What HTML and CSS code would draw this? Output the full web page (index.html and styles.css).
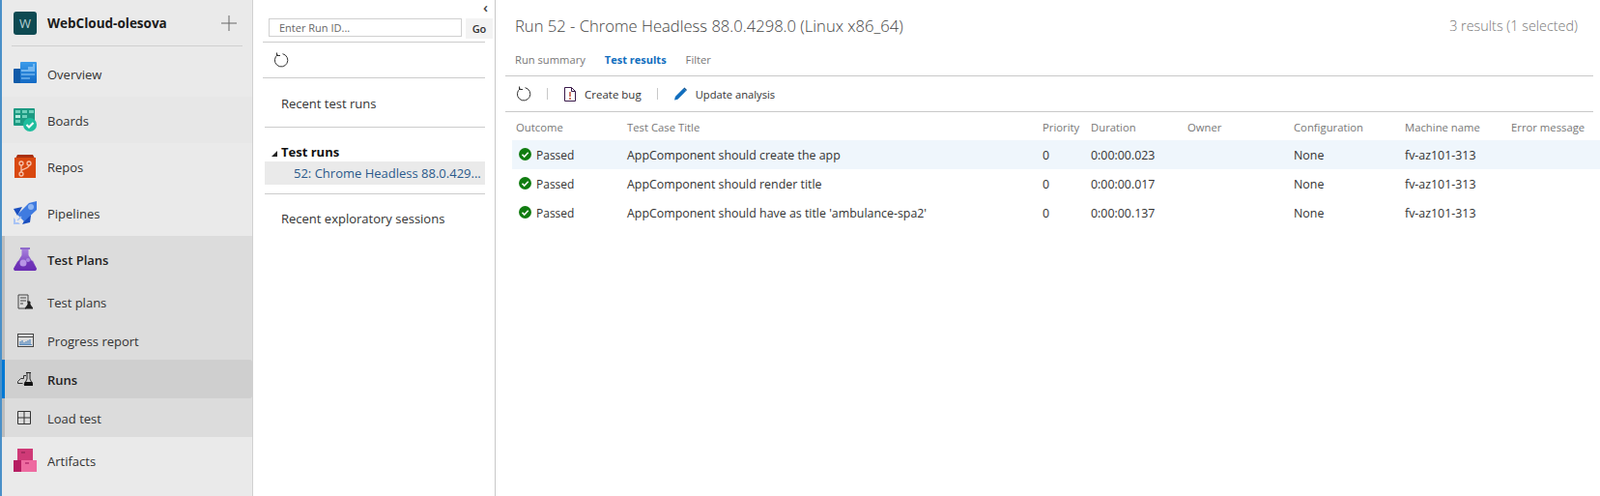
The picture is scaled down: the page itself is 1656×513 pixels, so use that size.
FILE: index.html
```html
<!DOCTYPE html>
<html lang="en">
<head>
    <meta charset="UTF-8">
    <title>Runs - Test Plans</title>
    <link rel="stylesheet" href="styles.css">
</head>
<body>
    <div class="app">
        <nav class="sidebar">
            <div class="project">
                <span class="avatar">W</span>
                <span class="project-name">WebCloud-olesova</span>
                <svg class="plus" width="18" height="18" viewBox="0 0 18 18"><path d="M1 9h16M9 1v16" stroke="#666" stroke-width="1" fill="none"/></svg>
            </div>
            <a class="nav-item">
                <svg class="nav-icon" viewBox="0 0 24 24"><defs><linearGradient id="ovGrad" x1="0" y1="0" x2="0" y2="1"><stop offset="0" stop-color="#3b9bea"/><stop offset="1" stop-color="#1269c4"/></linearGradient></defs><path d="M1 7h6v15H1a1 1 0 0 1-1-1V8a1 1 0 0 1 1-1z" fill="#0f5aa8"/><path d="M7 1a1 1 0 0 1 1-1h15a1 1 0 0 1 1 1v20a1 1 0 0 1-1 1H7z" fill="url(#ovGrad)"/><path d="M8 8h7V5h5V2h2v8H8z" fill="#8cc6f5" opacity=".75"/><path d="M8 12h14v2H8zM8 16h9v2H8z" fill="#8cc6f5" opacity=".55"/></svg>
                <span>Overview</span>
            </a>
            <a class="nav-item nav-boards">
                <svg class="nav-icon" viewBox="0 0 24 24"><rect x="0" y="0" width="22" height="18" rx="1" fill="#1c9a82"/><path d="M2 2h5v3H2zM9 2h5v3H9zM16 2h5v3h-5zM9 7h5v3H9zM2 12h5v3H2z" fill="#6fd0bb"/><path d="M2 7h5v3H2z" fill="#b6ecdf"/><circle cx="17" cy="17" r="7" fill="#1fbe9e"/><path d="M13.500 17l2.500 2.500 4.500-4.500" stroke="#fff" stroke-width="2" fill="none"/></svg>
                <span>Boards</span>
            </a>
            <a class="nav-item">
                <svg class="nav-icon" viewBox="0 0 24 24"><path d="M4 0h16l2 4H2z" fill="#a9300f"/><rect x="1" y="3" width="22" height="21" fill="#d9480f"/><g stroke="#f6c3ac" stroke-width="1.300" fill="none"><circle cx="8" cy="9" r="2"/><circle cx="16" cy="9" r="2"/><circle cx="8" cy="20" r="2"/><path d="M8 11v7M16 11c0 4-8 3-8 6"/></g></svg>
                <span>Repos</span>
            </a>
            <a class="nav-item">
                <svg class="nav-icon" viewBox="0 0 24 24"><path d="M0 8l9-2-5 9z" fill="#1a4fbf"/><path d="M18 15l-1 7-8 2 6-11z" fill="#1a4fbf"/><path d="M4 14L16 2l8-2v9L11 21z" fill="#3f7be0"/><circle cx="18" cy="6" r="3" fill="#8fb6f2"/><path d="M0 17v7h7l-2-2H2v-3z" fill="#a8c3f5"/><path d="M4 20l4-4" stroke="#a8c3f5" stroke-width="1.500"/></svg>
                <span>Pipelines</span>
            </a>
            <div class="nav-group">
                <a class="nav-item nav-head">
                    <svg class="nav-icon" viewBox="0 0 24 24"><defs><linearGradient id="flaskGrad" x1="0" y1="0" x2="0" y2="1"><stop offset="0" stop-color="#a67fdc"/><stop offset="1" stop-color="#6a2cb4"/></linearGradient></defs><rect x="7" y="0" width="10" height="2" fill="#8f6acb"/><path d="M8.500 2h7v6l8 13a2 2 0 0 1-2 3H2.500a2 2 0 0 1-2-3l8-13z" fill="url(#flaskGrad)"/><path d="M4 14.500c5-3 10 1.500 16-1l3.500 7.500a2 2 0 0 1-2 3H2.500a2 2 0 0 1-2-3z" fill="#6a2cb4" opacity=".7"/><circle cx="10" cy="16" r="3.500" fill="#b794e6"/><circle cx="15" cy="13" r="2" fill="#a98ae0"/></svg>
                    <span>Test Plans</span>
                </a>
                <a class="sub-item">
                    <svg class="sub-icon" viewBox="0 0 16 16"><path d="M9 15H1V1h10v7" stroke="#444" fill="none"/><path d="M3 4h6M3 7h6M3 10h3" stroke="#444" fill="none"/><path d="M10 8h3M11 8v3l-3 4h8l-3-4V8" stroke="#222" fill="#222"/></svg>
                    <span>Test plans</span>
                </a>
                <a class="sub-item">
                    <svg class="sub-icon sub-icon-wide" viewBox="0 0 17 14"><rect x=".5" y=".5" width="16" height="13" stroke="#444" fill="none"/><path d="M1 3.500h15" stroke="#444"/><path d="M3 11V8M5 11V7M7 11V9M9 11V8M11 11V7M13 11V6" stroke="#5f8fc0" stroke-width="1.300"/><path d="M2 11.500h13" stroke="#5f8fc0"/></svg>
                    <span>Progress report</span>
                </a>
                <a class="sub-item sub-active">
                    <svg class="sub-icon" viewBox="0 0 16 16"><path d="M.5 10.500l3-3h3v-3H9M.5 10.500v2h5" stroke="#333" fill="none"/><path d="M9 1.500h5M10 2v6l-3 6h9l-3-6V2" stroke="#222" fill="none"/><path d="M7.500 11h8l.5 4H7z" fill="#111"/></svg>
                    <span>Runs</span>
                </a>
                <a class="sub-item">
                    <svg class="sub-icon sub-icon-grid" viewBox="0 0 14 14"><path d="M.5.500h13v13H.5zM7 .5v13M.5 7h13" stroke="#333" fill="none"/></svg>
                    <span>Load test</span>
                </a>
            </div>
            <a class="nav-item">
                <svg class="nav-icon" viewBox="0 0 24 24"><rect x="4" y="0" width="16" height="12" fill="#cf3a77"/><rect x="8" y="3" width="4" height="2" fill="#a82c60"/><rect x="0" y="12" width="8" height="12" fill="#b61e62"/><rect x="8" y="12" width="16" height="12" fill="#ee6aa0"/><rect x="12" y="14" width="4" height="2" fill="#c63c7c"/></svg>
                <span>Artifacts</span>
            </a>
        </nav>

        <section class="runs-panel">
            <span class="collapse">‹</span>
            <div class="run-search">
                <input class="run-input" type="text" placeholder="Enter Run ID...">
                <button class="go-btn">Go</button>
            </div>
            <div class="panel-refresh">
                <svg width="16" height="16" viewBox="0 0 16 16"><path d="M4.500 2.600A6.700 6.700 0 1 0 9.500 1.700" stroke="#333" fill="none"/><path d="M3.500 .5v3h3.500" stroke="#333" fill="none"/></svg>
            </div>
            <div class="panel-link">Recent test runs</div>
            <div class="tree">
                <div class="tree-head"><span class="tree-arrow"></span>Test runs</div>
                <div class="tree-item">52: Chrome Headless 88.0.429...</div>
            </div>
            <div class="panel-link panel-link-last">Recent exploratory sessions</div>
        </section>

        <main class="main">
            <header class="run-title">
                <h1>Run 52 - Chrome Headless 88.0.4298.0 (Linux x86_64)</h1>
                <span class="result-count">3 results (1 selected)</span>
            </header>
            <div class="tabs">
                <a class="tab">Run summary</a>
                <a class="tab tab-active">Test results</a>
                <a class="tab">Filter</a>
            </div>
            <div class="toolbar">
                <svg class="tool-refresh" width="16" height="16" viewBox="0 0 16 16"><path d="M4.500 2.600A6.700 6.700 0 1 0 9.500 1.700" stroke="#333" fill="none"/><path d="M3.500 .5v3h3.500" stroke="#333" fill="none"/></svg>
                <span class="tool-sep"></span>
                <button class="tool-btn">
                    <svg width="12" height="15" viewBox="0 0 12 15"><path d="M.5.500h7l4 4v10H.500z" stroke="#3a1a4a" fill="none"/><path d="M7.500.5v4h4" stroke="#3a1a4a" fill="none"/><path d="M6 5v5M6 11v2" stroke="#b8321a" stroke-width="1.300"/></svg>
                    Create bug
                </button>
                <span class="tool-sep"></span>
                <button class="tool-btn tool-update">
                    <svg width="13" height="14" viewBox="0 0 15 15"><path d="M0 15l1-4L11 1l3 3L4 14z" fill="#106ebe"/><path d="M11 1l1-1 3 3-1 1z" fill="#0f4f8a"/></svg>
                    Update analysis
                </button>
            </div>
            <table class="results">
                <thead>
                    <tr>
                        <th class="col-outcome">Outcome</th>
                        <th class="col-title">Test Case Title</th>
                        <th class="col-priority">Priority</th>
                        <th class="col-duration">Duration</th>
                        <th class="col-owner">Owner</th>
                        <th class="col-config">Configuration</th>
                        <th class="col-machine">Machine name</th>
                        <th>Error message</th>
                    </tr>
                </thead>
                <tbody>
                    <tr class="selected">
                        <td><span class="passed"><svg width="13" height="13" viewBox="0 0 13 13"><circle cx="6.500" cy="6.500" r="6.500" fill="#107c10"/><path d="M3.500 6.800l2.200 2.200 4-4.200" stroke="#fff" stroke-width="1.600" fill="none"/></svg>Passed</span></td>
                        <td>AppComponent should create the app</td>
                        <td>0</td>
                        <td>0:00:00.023</td>
                        <td></td>
                        <td>None</td>
                        <td>fv-az101-313</td>
                        <td></td>
                    </tr>
                    <tr>
                        <td><span class="passed"><svg width="13" height="13" viewBox="0 0 13 13"><circle cx="6.500" cy="6.500" r="6.500" fill="#107c10"/><path d="M3.500 6.800l2.200 2.200 4-4.200" stroke="#fff" stroke-width="1.600" fill="none"/></svg>Passed</span></td>
                        <td>AppComponent should render title</td>
                        <td>0</td>
                        <td>0:00:00.017</td>
                        <td></td>
                        <td>None</td>
                        <td>fv-az101-313</td>
                        <td></td>
                    </tr>
                    <tr>
                        <td><span class="passed"><svg width="13" height="13" viewBox="0 0 13 13"><circle cx="6.500" cy="6.500" r="6.500" fill="#107c10"/><path d="M3.500 6.800l2.200 2.200 4-4.200" stroke="#fff" stroke-width="1.600" fill="none"/></svg>Passed</span></td>
                        <td>AppComponent should have as title 'ambulance-spa2'</td>
                        <td>0</td>
                        <td>0:00:00.137</td>
                        <td></td>
                        <td>None</td>
                        <td>fv-az101-313</td>
                        <td></td>
                    </tr>
                </tbody>
            </table>
        </main>
    </div>
</body>
</html>
```

FILE: styles.css
```css
* {
    box-sizing: border-box;
}
html, body {
    margin: 0;
    padding: 0;
    height: 100%;
    overflow: hidden;
    background-color: #fff;
}
body {
    font-family: "Open Sans", Arial, sans-serif;
    font-size: 12px;
    color: #333;
}
.app {
    display: flex;
    height: 513px;
}

/* left nav */
.sidebar {
    width: 262px;
    flex: none;
    background-color: #eaeaea;
    border-left: 2px solid #4a90c8;
    border-right: 1px solid #d0d0d0;
    font-size: 13px;
}
.project {
    display: flex;
    align-items: center;
    height: 48px;
    margin: 0 10px 4px 10px;
    padding: 0 4px 0 2px;
    border-bottom: 1px solid #d0d0d0;
}
.avatar {
    width: 24px;
    height: 24px;
    border-radius: 3px;
    background-color: #0e4a52;
    color: #b5cfd2;
    font-size: 13px;
    text-align: center;
    line-height: 24px;
    margin-right: 11px;
}
.project-name {
    flex: 1;
    font-weight: 700;
    font-size: 13.5px;
    color: #1b1b1b;
}
.plus {
    margin-right: 1px;
}
.nav-item {
    display: flex;
    align-items: center;
    height: 48px;
    padding-left: 12px;
    color: #333;
}
.nav-item span,
.sub-item span {
    padding-top: 2px;
}
.nav-boards {
    background-color: #e7e7e7;
}
.nav-icon {
    width: 24px;
    height: 24px;
    margin-right: 11px;
    flex: none;
}
.nav-group {
    background-color: #dcdcdc;
    border-left: 3px solid #bdbdbd;
    height: 208px;
}
.nav-head {
    padding-left: 9px;
    font-weight: 600;
    color: #222;
}
.sub-item {
    display: flex;
    align-items: center;
    height: 40px;
    padding-left: 13px;
    color: #333;
}
.sub-icon {
    width: 16px;
    height: 16px;
    margin-right: 15px;
    flex: none;
}
.sub-icon-wide {
    width: 17px;
    margin-right: 14px;
}
.sub-icon-grid {
    width: 14px;
    height: 14px;
    margin-right: 17px;
}
.sub-active {
    background-color: #cfcfcf;
    border-left: 3px solid #0078d4;
    margin-left: -3px;
    border-radius: 0 3px 3px 0;
    font-weight: 600;
    color: #222;
}

/* runs panel */
.runs-panel {
    position: relative;
    width: 251px;
    flex: none;
    border-right: 1px solid #c8c8c8;
    padding: 19px 10px 0 10px;
}
.collapse {
    position: absolute;
    top: -3px;
    right: 7px;
    font-size: 15px;
    font-weight: 600;
    color: #444;
}
.run-search {
    display: flex;
    align-items: flex-start;
    gap: 4px;
    margin-left: 6px;
    margin-right: -8px;
    height: 24px;
}
.run-input {
    width: 200px;
    height: 19px;
    border: 1px solid #d0d0d0;
    padding: 0 10px;
    font-family: inherit;
    font-size: 11px;
}
.run-input::placeholder {
    color: #666;
}
.go-btn {
    width: 28px;
    height: 21px;
    border: none;
    background-color: #f3f3f3;
    font-family: inherit;
    font-size: 11px;
    font-weight: 600;
    color: #333;
    padding: 0;
}
.panel-refresh {
    height: 38px;
    padding: 10px 0 0 11px;
    border-top: 1px solid #ccc;
    border-bottom: 1px solid #ccc;
}
.panel-link {
    height: 51px;
    margin-left: 2px;
    padding-left: 17px;
    line-height: 53px;
    font-size: 13px;
    border-bottom: 1px solid #ccc;
}
.panel-link-last {
    border-bottom: none;
    line-height: 51px;
}
.tree {
    height: 69px;
    margin-left: 2px;
    padding-top: 16px;
    border-bottom: 1px solid #ccc;
}
.tree-head {
    position: relative;
    height: 19px;
    padding-left: 17px;
    line-height: 19px;
    font-size: 13px;
    font-weight: 700;
    color: #111;
}
.tree-arrow {
    position: absolute;
    left: 7px;
    top: 8px;
    border-style: solid;
    border-width: 0 0 6px 6px;
    border-color: transparent transparent #222 transparent;
}
.tree-item {
    height: 24px;
    padding-left: 30px;
    background-color: #eaeaea;
    line-height: 24px;
    font-size: 13px;
    color: #2a5a8c;
    white-space: nowrap;
    overflow: hidden;
}

/* main */
.main {
    flex: 1;
    min-width: 0;
    padding-left: 10px;
}
.run-title {
    display: flex;
    justify-content: space-between;
    align-items: center;
    height: 52px;
    padding: 0 23px 0 10px;
}
.run-title h1 {
    margin: 0;
    font-size: 16.6px;
    font-weight: 300;
    color: #444;
}
.result-count {
    font-size: 14.4px;
    font-weight: 300;
    color: #777;
}
.tabs {
    display: flex;
    gap: 20px;
    height: 27px;
    width: 1126px;
    padding: 1px 0 0 10px;
    line-height: 18px;
    font-size: 11.2px;
    border-bottom: 1px solid #c8c8c8;
}
.tab {
    color: #777;
}
.tab-active {
    color: #106ebe;
    font-weight: 700;
    font-size: 11px;
}
.toolbar {
    display: flex;
    align-items: center;
    width: 1126px;
    height: 37px;
    padding-left: 11px;
    border-bottom: 1px solid #c8c8c8;
}
.tool-refresh {
    flex: none;
}
.tool-sep {
    width: 1px;
    height: 12px;
    margin: 0 17px 0 16px;
    background-color: #c8c8c8;
}
.tool-btn {
    display: flex;
    align-items: center;
    gap: 9px;
    border: none;
    background: none;
    padding: 0;
    font-family: inherit;
    font-size: 11.5px;
    color: #333;
}
.tool-update {
    font-size: 11.2px;
}
.results {
    border-collapse: collapse;
    table-layout: fixed;
    width: 1126px;
    margin-left: 7px;
}
.results th {
    height: 29px;
    padding: 2px 0 0 4px;
    font-size: 11.3px;
    font-weight: 400;
    text-align: left;
    color: #777;
    white-space: nowrap;
}
.results td {
    height: 30px;
    padding: 0 0 0 4px;
    font-size: 12.4px;
    color: #333;
    white-space: nowrap;
}
.results .col-outcome { width: 115px; }
.results .col-title { width: 430px; }
.results .col-priority { width: 50px; }
.results .col-duration { width: 100px; }
.results .col-owner { width: 110px; }
.results .col-config { width: 115px; }
.results .col-machine { width: 110px; }
.selected {
    background-color: #eff6fc;
}
.passed {
    display: flex;
    align-items: center;
    gap: 5px;
    padding-left: 3px;
    font-size: 12px;
}
.passed svg {
    margin-top: -2px;
}
```
